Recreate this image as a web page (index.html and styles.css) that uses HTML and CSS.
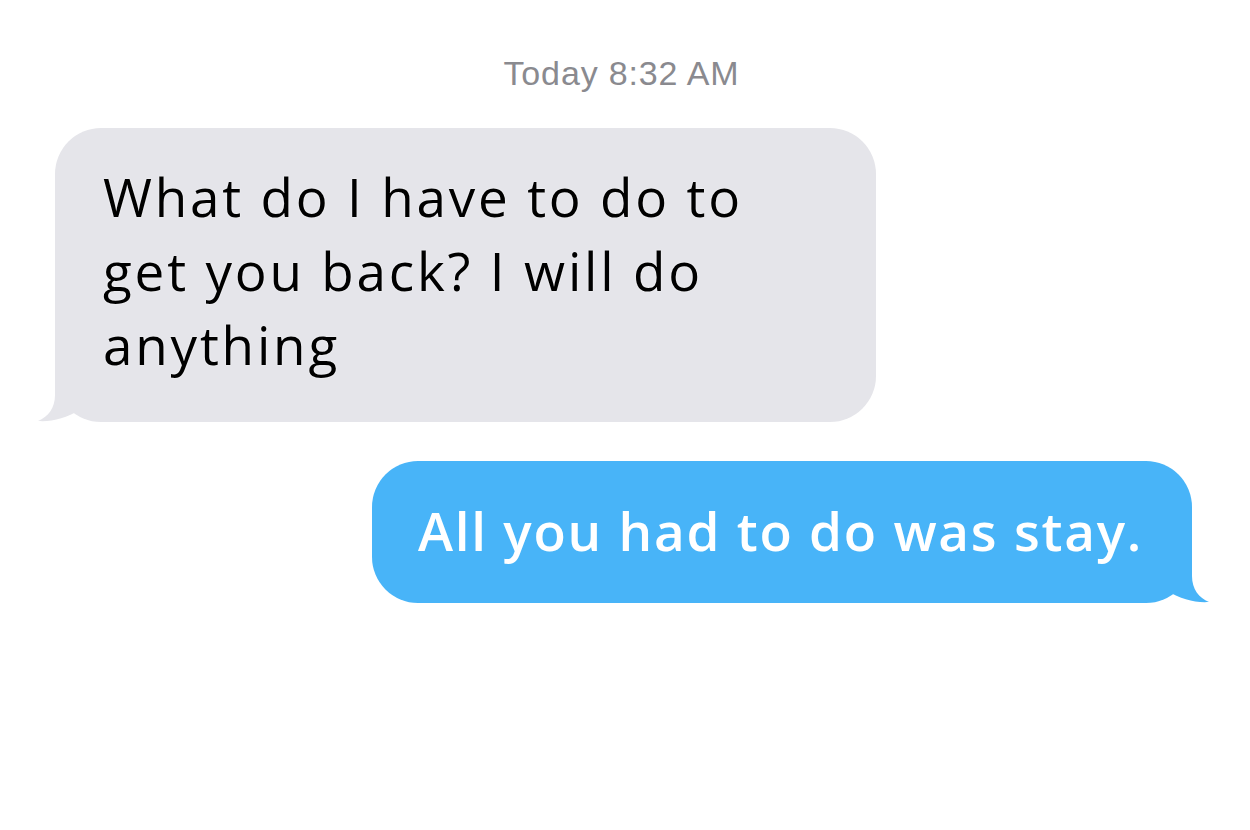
FILE: index.html
```html
<!DOCTYPE html>
<html lang="en">
<head>
    <meta charset="UTF-8">
    <title>Messages</title>
    <link rel="stylesheet" href="styles.css">
</head>
<body>
    <div class="thread">
        <div class="timestamp">Today 8:32 AM</div>

        <div class="row received">
            <div class="bubble">
                What do I have to do to<br>get you back? I will do<br>anything
                <svg class="tail" viewBox="0 0 50 55" width="50" height="55"><path d="M20,3 L20,28 C20,41 13,50 3,54 C17,55 31,51 45,43 L45,3 Z"/></svg>
            </div>
        </div>

        <div class="row sent">
            <div class="bubble">
                All you had to do was stay.
                <svg class="tail" viewBox="0 0 50 55" width="50" height="55"><path d="M30,3 L30,28 C30,41 37,50 47,54 C33,55 19,51 5,43 L5,3 Z"/></svg>
            </div>
        </div>
    </div>
</body>
</html>
```

FILE: styles.css
```css
body { margin: 0; background: #fff; font-family: "Open Sans", "Noto Sans", sans-serif; }
.thread { width: 1250px; padding-top: 53px; }
.timestamp { font-family: "Liberation Sans", Arial, sans-serif; font-size: 34px; line-height: 40px; letter-spacing: 0.85px; color: #8a8a8f; text-align: center; margin-bottom: 35px; padding-right: 7px; }
.row { display: flex; }
.row.received { padding-left: 55px; margin-bottom: 39px; }
.row.sent { justify-content: flex-end; padding-right: 58px; }
.bubble { position: relative; font-size: 53px; line-height: 74px; border-radius: 46px; }
.received .bubble { background: #e5e5ea; color: #000; width: 821px; box-sizing: border-box; padding: 32px 20px 40px 48px; letter-spacing: 2.8px; text-shadow: 0 0 2px rgba(255,255,255,0.9); }
.sent .bubble { background: #48b4f8; color: #fff; font-weight: 600; width: 820px; box-sizing: border-box; padding: 33px 20px 35px 46px; letter-spacing: 1.75px; }
.tail { position: absolute; bottom: 0; }
.received .tail { left: -20px; fill: #e5e5ea; }
.sent .tail { right: -20px; fill: #48b4f8; }
```
